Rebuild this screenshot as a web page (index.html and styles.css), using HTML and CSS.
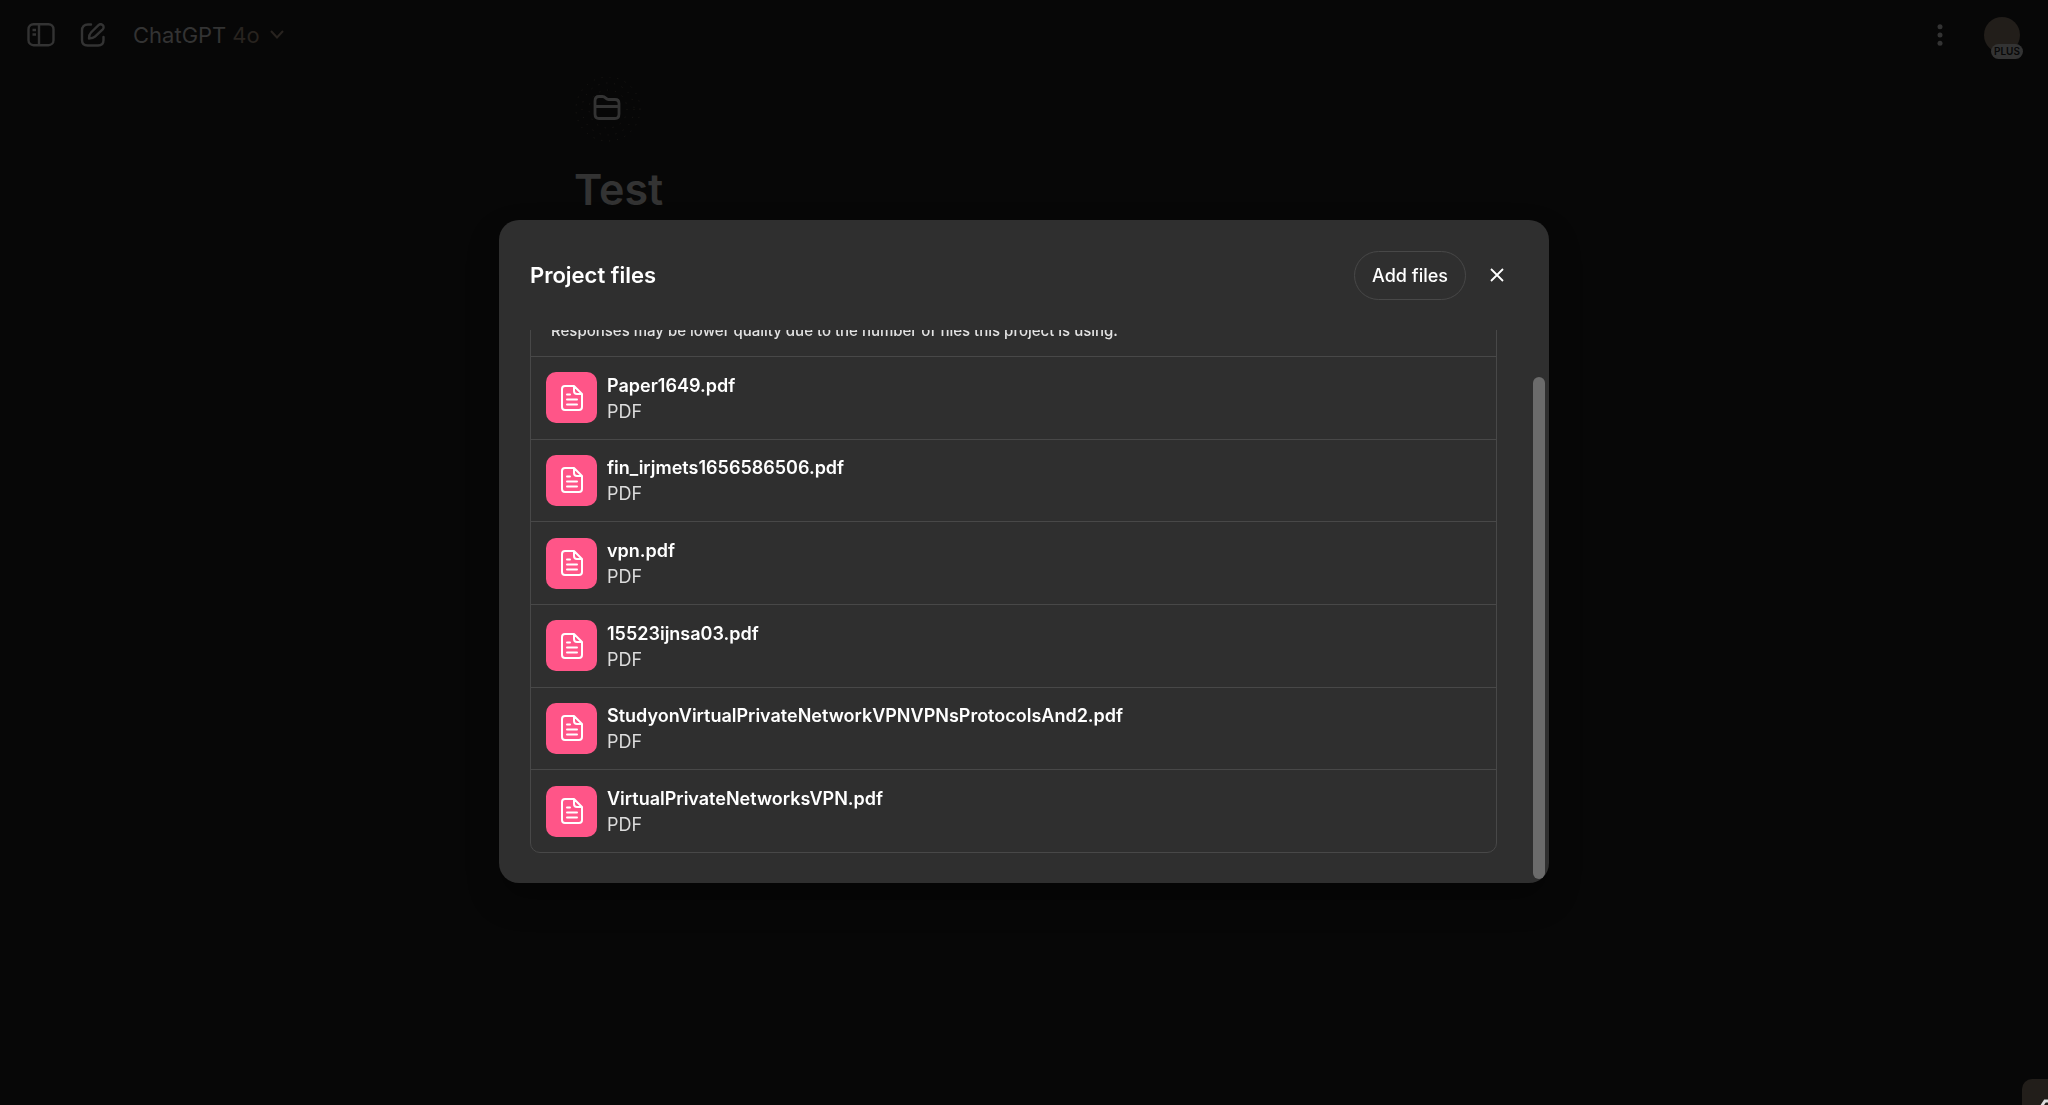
FILE: index.html
```html
<!DOCTYPE html>
<html lang="en">
  <head>
    <meta charset="UTF-8" />
    <meta name="viewport" content="width=device-width, initial-scale=1.0" />
    <title>Test</title>
    <link rel="stylesheet" href="styles.css" />
  </head>

  <body>
    <header class="topbar">
      <button class="icon-btn" aria-label="Open sidebar">
        <svg width="28" height="24" viewBox="0 0 28 24" fill="none" stroke="currentColor" stroke-width="2.4">
          <rect x="1.5" y="1.2" width="25" height="21" rx="5" />
          <path d="M12 1v21.5M5.5 7h3.5M5.5 11.5h3.5" />
        </svg>
      </button>
      <button class="icon-btn" aria-label="New chat">
        <svg width="26" height="24" viewBox="0 0 26 24" fill="none" stroke="currentColor" stroke-width="2.4" stroke-linecap="round" stroke-linejoin="round">
          <path d="M11 1.5H8C4 1.5 2 4 2 7.5V17c0 3.5 2 5.500 5.5 5.5H18c3.5 0 5.5-2 5.5-5.5v-3" />
          <path d="M9 15.500c0-3 .5-4.5 2-6L18.500 2.200c1.200-1.200 3-1.200 4.200 0 1.200 1.200 1.200 3 0 4.200L15 13.700c-1.500 1.500-3 1.800-6 1.800z" />
        </svg>
      </button>
      <button class="model">
        ChatGPT <span class="version">4o</span>
        <svg class="version" width="14" height="9" viewBox="0 0 14 9" fill="none" stroke="currentColor" stroke-width="2">
          <path d="M1 1l6 6.500L13 1" />
        </svg>
      </button>
      <div class="account">
        <button class="icon-btn" aria-label="More">
          <svg width="6" height="22" viewBox="0 0 6 22" fill="currentColor">
            <circle cx="3" cy="2.7" r="2.5" />
            <circle cx="3" cy="11" r="2.5" />
            <circle cx="3" cy="19.3" r="2.5" />
          </svg>
        </button>
        <button class="avatar" aria-label="Account"><span class="plan">PLUS</span></button>
      </div>
    </header>

    <main class="project">
      <div class="folder">
        <svg width="68" height="66" viewBox="0 0 68 66" fill="none" stroke="currentColor" stroke-width="2.8" stroke-linejoin="round">
          <g class="dots" stroke-width="1" stroke-dasharray="1 7">
            <circle cx="34" cy="32" r="32" />
            <circle cx="34" cy="32" r="26" />
            <circle cx="34" cy="32" r="19" />
          </g>
          <path d="M21 24c0-3 1.5-4.5 4-4.5h3.5c3 0 3.5 3 6 3H41c3 0 4 1.500 4 4V37c0 3-1.5 4.5-4 4.5H25c-3 0-4-1.500-4-4.5zM21 29.5h24" />
        </svg>
      </div>
      <h1>Test</h1>
    </main>

    <div class="overlay">
      <section class="modal" role="dialog" aria-labelledby="title">
        <div class="modal-header">
          <h2 id="title">Project files</h2>
          <button class="add">Add files</button>
          <button class="close" aria-label="Close">
            <svg width="14" height="14" viewBox="0 0 14 14" fill="none" stroke="currentColor" stroke-width="1.8">
              <path d="M1 1l12 12M13 1L1 13" />
            </svg>
          </button>
        </div>
        <div class="modal-body">
          <div class="list">
            <p class="notice">Responses may be lower quality due to the number of files this project is using.</p>
            <ul class="files">
              <li>
                <span class="tile"><svg class="doc"><use href="#doc" /></svg></span>
                <div class="info"><b>Paper1649.pdf</b><span>PDF</span></div>
              </li>
              <li>
                <span class="tile"><svg class="doc"><use href="#doc" /></svg></span>
                <div class="info"><b>fin_irjmets1656586506.pdf</b><span>PDF</span></div>
              </li>
              <li>
                <span class="tile"><svg class="doc"><use href="#doc" /></svg></span>
                <div class="info"><b>vpn.pdf</b><span>PDF</span></div>
              </li>
              <li>
                <span class="tile"><svg class="doc"><use href="#doc" /></svg></span>
                <div class="info"><b>15523ijnsa03.pdf</b><span>PDF</span></div>
              </li>
              <li>
                <span class="tile"><svg class="doc"><use href="#doc" /></svg></span>
                <div class="info"><b>StudyonVirtualPrivateNetworkVPNVPNsProtocolsAnd2.pdf</b><span>PDF</span></div>
              </li>
              <li>
                <span class="tile"><svg class="doc"><use href="#doc" /></svg></span>
                <div class="info"><b>VirtualPrivateNetworksVPN.pdf</b><span>PDF</span></div>
              </li>
            </ul>
          </div>
        </div>
        <div class="scrollbar"></div>
      </section>
    </div>

    <div class="widget">
      <svg width="36" height="36" viewBox="0 0 36 36" fill="none" stroke="#ddd" stroke-width="3">
        <path d="M19 28l4-6h5" />
      </svg>
    </div>

    <svg class="sprite">
      <symbol id="doc" viewBox="0 0 22 26">
        <path d="M4 1h9l8 8v13a3 3 0 0 1-3 3H4a3 3 0 0 1-3-3V4a3 3 0 0 1 3-3zM13 1v5a3 3 0 0 0 3 3h5M6 9.5h3M6 14.5h10M6 19.5h10" fill="none" stroke="#fff" stroke-width="2" stroke-linecap="round" stroke-linejoin="round" />
      </symbol>
    </svg>
  </body>
</html>
```
FILE: styles.css
```css
* {
  box-sizing: border-box;
}

body {
  margin: 0;
  min-height: 100vh;
  overflow: hidden;
  background: #070707;
  color: #333;
  font-family: Inter, "Liberation Sans", sans-serif;
}

h1,
h2,
p,
ul {
  margin: 0;
  padding: 0;
}

button {
  padding: 0;
  border: 0;
  background: none;
  color: inherit;
  font: inherit;
  cursor: pointer;
}

svg {
  display: block;
}

.topbar {
  display: flex;
  align-items: center;
  gap: 25px;
  height: 69px;
  padding: 0 28px 0 27px;
}

.model {
  display: flex;
  align-items: center;
  gap: 6px;
  margin-left: 2px;
  font-size: 22px;
}

.version {
  color: #28231f;
}

svg.version {
  margin-left: 4px;
}

.account {
  display: flex;
  align-items: center;
  gap: 41px;
  margin-left: auto;
}

.avatar {
  position: relative;
  width: 36px;
  height: 36px;
  border-radius: 50%;
  background: #221e1a;
}

.plan {
  position: absolute;
  top: 27px;
  left: 7px;
  padding: 0 3px;
  border-radius: 8px;
  background: #333;
  color: #080808;
  font-size: 10px;
  font-weight: 600;
  line-height: 15px;
}

.project {
  width: 900px;
  max-width: 100%;
  margin: 0 auto;
  padding-top: 8px;
}

.dots {
  color: #1c1916;
}

h1 {
  margin-top: 18px;
  font-size: 43px;
  font-weight: 600;
  line-height: 56px;
}

.overlay {
  position: fixed;
  inset: 0;
  display: flex;
  align-items: center;
  justify-content: center;
  padding-bottom: 2px;
}

.modal {
  position: relative;
  display: flex;
  flex-direction: column;
  width: 1050px;
  max-width: 100%;
  height: 60vh;
  overflow: hidden;
  border-radius: 20px;
  background: #2f2f2f;
  box-shadow: 0 16px 32px rgba(0, 0, 0, 0.3);
  color: #fff;
}

.modal-header {
  display: flex;
  align-items: center;
  height: 110px;
  padding: 0 45px 0 31px;
}

h2 {
  flex: 1;
  font-size: 22px;
  font-weight: 600;
}

.add {
  height: 49px;
  padding: 0 17px;
  border: 1px solid #484848;
  border-radius: 25px;
  font-size: 18px;
  font-weight: 500;
}

.close {
  margin-left: 24px;
}

/* kept scrolled to the end, so the notice is cut off at the top */
.modal-body {
  flex: 1;
  display: flex;
  flex-direction: column;
  justify-content: flex-end;
  min-height: 0;
  overflow: hidden;
  padding: 0 52px 30px 31px;
}

.list {
  border: 1px solid #484848;
  border-radius: 10px;
}

.notice {
  padding: 16px 20px 15px;
  color: #e3e3e3;
  font-size: 15px;
  font-weight: 500;
  line-height: 20px;
}

.files {
  display: grid;
  grid-auto-rows: 1fr;
  height: 496px;
  list-style: none;
}

.files li {
  display: flex;
  align-items: center;
  gap: 10px;
  padding: 0 15px;
  border-top: 1px solid #484848;
}

.info {
  padding-top: 2px;
}

.info b,
.info span {
  display: block;
  font-size: 18px;
  line-height: 26px;
}

.info b {
  font-weight: 600;
}

.info span {
  color: #dcdcdc;
}

.tile {
  display: grid;
  place-items: center;
  width: 51px;
  height: 51px;
  border-radius: 10px;
  background: #ff5588;
}

.doc {
  width: 22px;
  height: 26px;
}

.scrollbar {
  position: absolute;
  right: 4px;
  bottom: 4px;
  width: 12px;
  height: 502px;
  border-radius: 6px;
  background: #6b6b6b;
}

.widget {
  position: fixed;
  right: -10px;
  bottom: -10px;
  width: 36px;
  height: 36px;
  border-radius: 10px;
  background: #221e1a;
}

.sprite {
  position: absolute;
  width: 0;
  height: 0;
}
```
